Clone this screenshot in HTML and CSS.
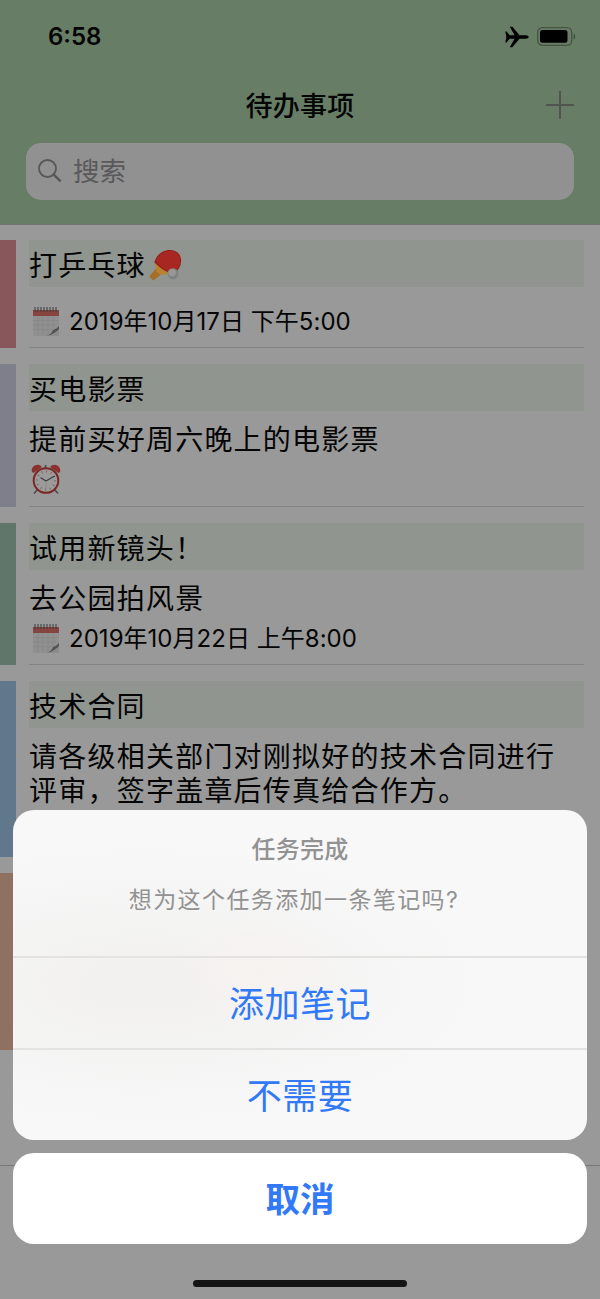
FILE: index.html
```html
<!DOCTYPE html>
<html lang="zh-CN">
<head>
<meta charset="utf-8">
<title>待办事项</title>
<link rel="stylesheet" href="styles.css">
</head>
<body>
<div class="phone">
  <header class="header">
    <div class="status">
      <span class="time">6:58</span>
      <div class="indicators">
        <svg class="plane" width="24" height="22" viewBox="0 0 24 22"><path d="M.3 5.4h1.3l3 3.9h5L4.8.8h2.500l7.3 8.500h6.2c1.8 0 2.8.8 2.8 1.700s-1 1.700-2.8 1.700h-6.2l-7.3 8.500H4.8l4.8-8.500h-5l-3 3.900H.3L1.400 11z"/></svg>
        <svg width="39" height="19" viewBox="0 0 39 19"><rect x=".7" y=".7" width="34" height="17.6" rx="4.6" fill="none" stroke="#465444" stroke-width="1.3"/><rect x="3" y="3" width="27.5" height="12.8" rx="2.4"/><path d="M36.7 6.4c1.9 1 1.9 5.2 0 6.2z" fill="#3d493b"/></svg>
      </div>
    </div>
    <div class="nav">
      <h1 class="nav-title">待办事项</h1>
      <svg class="plus" width="28" height="28" viewBox="0 0 28 28"><path d="M14 0v28M0 14h28" stroke="#515451" stroke-width="2"/></svg>
    </div>
    <div class="search">
      <svg width="24" height="24" viewBox="0 0 24 24" fill="none" stroke="#57575a"><circle cx="9.500" cy="9.500" r="8.500" stroke-width="1.8"/><path d="M15.600 15.700l6.400 6" stroke-width="2.500" stroke-linecap="round"/></svg>
      <span>搜索</span>
    </div>
  </header>

  <main class="list">
    <article class="item">
      <div class="tag red"></div>
      <div class="body short">
        <h2 class="title"><span>打乒乓球</span><svg class="paddle" width="34" height="32" viewBox="0 0 34 32"><path d="M1.200 27.600L9 18.500l6 5.500-9.800 7.500z" fill="#a36e27"/><path d="M6.800 13.800l14.400 10.600c-4 1.200-7 .9-9.200 1.300l-4-3.600c.9-2.500-.9-5-1.200-8.300z" fill="#b98230"/><path d="M6.300 13.300C8.500 5.800 14.500.8 22 .9c7 .1 11.300 4.800 11.100 11-.2 5.500-3.200 10.200-8.200 13.300C18.200 23.200 11.800 19.200 6.300 13.300z" fill="#8f1e1a"/><path d="M7.600 12.300C10 6 15.500 1.800 22 1.700c6 0 10.300 4 10.300 9.700 0 5.200-3.300 10-8.300 12.700C17.500 21.800 12.200 17.800 7.600 12.300z" fill="#a92722"/><circle cx="25" cy="24.800" r="5.600" fill="#828283"/><circle cx="24.200" cy="23.700" r="3.600" fill="#989898"/></svg></h2>
        <div class="meta"><svg class="calendar" width="28" height="31" viewBox="0 0 28 31"><path d="M1 4h26v18l-8.500 8H1z" fill="#909090"/><path d="M1 4h26v6H1z" fill="#86443f"/><path d="M1 14.500h26M1 19h23M1 23.500h19M6 10v20M11 10v20M16 10v19M21 10v13" stroke="#858585" stroke-width=".6"/><path d="M3 1v5M6 1v5M9 1v5M12 1v5M15 1v5M18 1v5M21 1v5M24 1v5" stroke="#3c3b3c" stroke-width="1"/><path d="M27 20v10H14c5-.7 7-4 8-7 2 0 4-1.500 5-3z" fill="#8b8b8b"/><path d="M27 20c-1 1.500-3 3-6 4-1 3-3 5-7 6 6-.7 10-4 13-7z" fill="#505254"/></svg><span>2019年10月17日 下午5:00</span></div>
      </div>
    </article>
    <article class="item">
      <div class="tag lilac"></div>
      <div class="body medium">
        <h2 class="title"><span>买电影票</span></h2>
        <p class="note">提前买好周六晚上的电影票</p>
        <div class="meta"><svg class="clock" width="30" height="31" viewBox="0 0 30 31"><path d="M7 25l-4 4.500M23 25l4 4.500M14.500 1v4" stroke="#4f4f51" stroke-width="1.8"/><path d="M1 8C-.4 4 4-1 9.500 1.500L11 3 2.500 9zM29 8c1.400-4-3-9-8.500-6.500L19 3l8.500 6z" fill="#8b302c"/><circle cx="15" cy="16.500" r="12.300" fill="#9b9b99" stroke="#792824" stroke-width="2"/><circle cx="15" cy="16.500" r="9" fill="none" stroke="#884c4b" stroke-width="2" stroke-dasharray=".8 3.912"/><path d="M9.500 13.500l5.500 3.500 8.500-5" fill="none" stroke="#3b4144" stroke-width="1.300"/><path d="M15 17v10" stroke="#858687" stroke-width=".8"/></svg></div>
      </div>
    </article>
    <article class="item">
      <div class="tag green"></div>
      <div class="body medium">
        <h2 class="title"><span>试用新镜头！</span></h2>
        <p class="note">去公园拍风景</p>
        <div class="meta"><svg class="calendar" width="28" height="31" viewBox="0 0 28 31"><path d="M1 4h26v18l-8.500 8H1z" fill="#909090"/><path d="M1 4h26v6H1z" fill="#86443f"/><path d="M1 14.500h26M1 19h23M1 23.500h19M6 10v20M11 10v20M16 10v19M21 10v13" stroke="#858585" stroke-width=".6"/><path d="M3 1v5M6 1v5M9 1v5M12 1v5M15 1v5M18 1v5M21 1v5M24 1v5" stroke="#3c3b3c" stroke-width="1"/><path d="M27 20v10H14c5-.7 7-4 8-7 2 0 4-1.500 5-3z" fill="#8b8b8b"/><path d="M27 20c-1 1.500-3 3-6 4-1 3-3 5-7 6 6-.7 10-4 13-7z" fill="#505254"/></svg><span>2019年10月22日 上午8:00</span></div>
      </div>
    </article>
    <article class="item">
      <div class="tag blue"></div>
      <div class="body tall">
        <h2 class="title"><span>技术合同</span></h2>
        <p class="note">请各级相关部门对刚拟好的技术合同进行<br>评审，签字盖章后传真给合作方。</p>
      </div>
    </article>
    <article class="item">
      <div class="tag orange"></div>
      <div class="body last"></div>
    </article>
  </main>
  <footer class="toolbar"></footer>

  <div class="sheet">
    <section class="panel">
      <div class="prompt">
        <h3 class="prompt-title">任务完成</h3>
        <p class="prompt-text">想为这个任务添加一条笔记吗?</p>
      </div>
      <div class="action">添加笔记</div>
      <div class="action">不需要</div>
    </section>
    <div class="cancel">取消</div>
    <div class="home"></div>
  </div>
</div>
</body>
</html>
```
FILE: styles.css
```css
* { box-sizing: border-box; }
body { margin: 0; }
h1, h2, h3, p { margin: 0; font-weight: 400; }
svg { display: block; flex: none; }

.phone {
  position: relative;
  width: 600px;
  height: 1299px;
  overflow: hidden;
  display: flex;
  flex-direction: column;
  background: #999;
  color: #050505;
  font-family: Inter, "Noto Sans CJK SC", sans-serif;
}

/* Header */
.header {
  height: 225px;
  flex: none;
  background: #687d66;
  border-bottom: 1px solid #737374;
}
.status {
  height: 73px;
  padding: 0 24px 0 48px;
  display: flex;
  align-items: center;
  justify-content: space-between;
}
.time { font-size: 24px; font-weight: 600; letter-spacing: 0; }
.indicators { display: flex; align-items: center; gap: 8px; }
.nav {
  height: 70px;
  padding: 0 26px;
  display: grid;
  grid-template-columns: 28px 1fr 28px;
  align-items: center;
}
.nav-title {
  grid-column: 2;
  text-align: center;
  font-size: 27px;
  line-height: 68px;
  height: 70px;
  font-weight: 500;
  letter-spacing: 0.200px;
}
.plus { margin-bottom: 7px; }
.search {
  height: 57px;
  margin: 0 26px;
  padding: 0 12px 2px;
  border-radius: 15px;
  background: #919191;
  display: flex;
  align-items: center;
  gap: 11px;
  color: #59595b;
  font-size: 26.500px;
  line-height: 54px;
}
.search span { padding-top: 1px; }

/* Tasks */
.list { padding-top: 15px; display: flex; flex-direction: column; gap: 16px; }
.item { display: flex; gap: 13px; }
.tag { width: 16px; flex: none; }
.red { background: #88575b; }
.lilac { background: #7f7e8b; }
.green { background: #60766b; }
.blue { background: #60778c; }
.orange { background: #8f7161; }
.body { width: 555px; border-bottom: 1px solid #838384; }
.short { height: 108px; }
.medium { height: 142.500px; }
.tall { height: 176px; border-color: transparent; }
.last { height: 177px; border-color: transparent; }
.title {
  height: 47px;
  background: #909590;
  display: flex;
  align-items: center;
  font-size: 28px;
  line-height: 47px;
  letter-spacing: 1.200px;
}
.title span { padding-top: 6px; }
.paddle { margin: 3px 0 0 2px; }
.note {
  font-size: 28px;
  line-height: 34px;
  letter-spacing: 1.230px;
  padding-top: 12px;
  white-space: nowrap;
}
.meta {
  height: 44px;
  display: flex;
  align-items: center;
  gap: 9px;
  padding-left: 3px;
  font-size: 24px;
}
.meta span { padding-bottom: 3px; letter-spacing: 0.030px; }
.short .meta { height: 68px; }
.medium .meta { height: 45px; }
.clock { margin-left: -1px; }
.toolbar { margin-top: 115px; border-top: 1px solid #777; }

/* Action sheet floats over the task list */
.sheet {
  position: absolute;
  inset: 810px 13px 0;
  display: flex;
  flex-direction: column;
  align-items: center;
}
.panel {
  width: 574px;
  height: 330px;
  border-radius: 21px;
  overflow: hidden;
  background:
    radial-gradient(ellipse 80px 50px at 245px 160px, #f7f2ef, transparent),
    radial-gradient(ellipse 340px 140px at 130px 175px, #f1f0ef, transparent),
    #f8f8f8;
  text-align: center;
}
.prompt { height: 146px; padding-top: 22px; color: #929292; }
.prompt-title { font-size: 24px; line-height: 36px; font-weight: 500; letter-spacing: 0.300px; }
.prompt-text {
  font-size: 23px;
  line-height: 36px;
  margin-top: 14px;
  padding-right: 12px;
  letter-spacing: 1.400px;
}
.action {
  height: 92px;
  border-top: 2px solid #e4e3e2;
  color: #3179f6;
  font-size: 35px;
  line-height: 93px;
  letter-spacing: 0.500px;
}
.cancel {
  width: 574px;
  height: 91px;
  margin-top: 13px;
  border-radius: 21px;
  background: #fff;
  color: #3179f6;
  font-size: 34.500px;
  font-weight: 700;
  line-height: 94px;
  text-align: center;
}
.home { width: 214px; height: 7px; margin-top: 36px; border-radius: 4px; background: #141414; }
```
